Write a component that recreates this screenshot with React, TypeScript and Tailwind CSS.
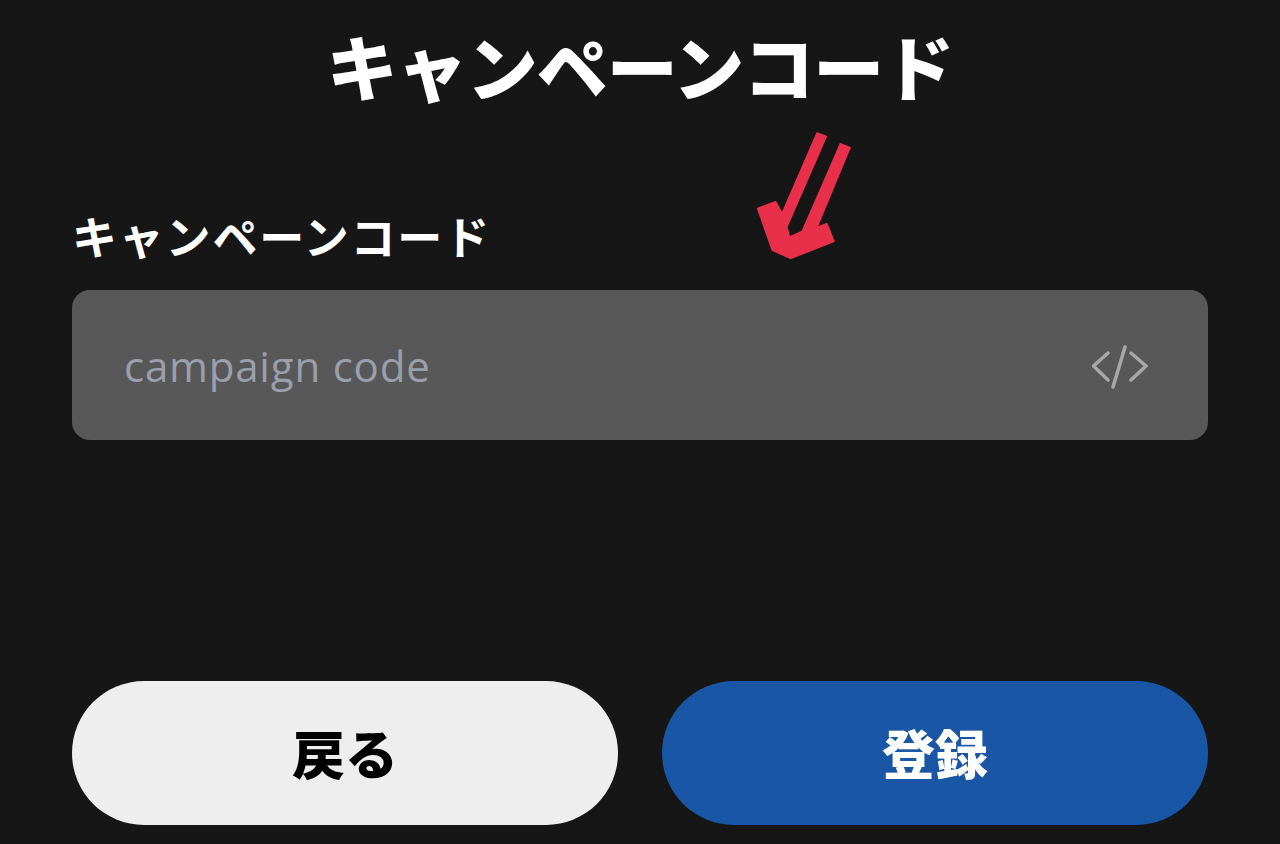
export default function App() {
  return (
    <div
      className="h-[844px] w-full overflow-hidden bg-[#161616] px-[72px] text-white"
      style={{ fontFamily: '"Noto Sans CJK JP", sans-serif' }}
    >
      <h1 className="h-[134px] pt-[20px] text-center text-[71px] leading-[88px] font-black tracking-[-1px]">キャンペーンコード</h1>

      <div className="relative h-[156px]">
        <div className="pt-[70px] text-[45px] leading-[64px] font-bold tracking-[1.8px]">キャンペーンコード</div>
        <svg className="absolute top-[-14px] left-[658px]" width="140" height="150" viewBox="0 0 420 450">
          <path
            d="M260 36 L292 48 L173 321 L180 348 L215 332 L330 68 L363 82 L265 318 L292 308 L315 365 L182 418 L125 392 L80 264 L138 242 L156 275 Z"
            fill="#e8304a"
          />
        </svg>
      </div>

      <div className="flex h-[150px] items-center justify-between rounded-[18px] bg-[#585858] pt-[4px] pr-[60px] pl-[52px]">
        <span className="mb-[4px] text-[42px] tracking-[0.8px] text-[#9a9fac]" style={{ fontFamily: '"Open Sans", sans-serif' }}>campaign code</span>
        <svg width="56" height="44" viewBox="0 0 56 44" fill="none" stroke="#a8a8a8" strokeWidth="3.5" strokeLinecap="round">
          <path d="M16 8 L1.5 21 L16 35" />
          <path d="M33 2 L21 42" />
          <path d="M39 8 L54 21 L39 35" />
        </svg>
      </div>

      <div className="mt-[241px] flex gap-[44px]">
        <button className="h-[144px] flex-1 rounded-full bg-[#eeeeee] text-[53px] font-black text-black">戻る</button>
        <button className="h-[144px] flex-1 rounded-full bg-[#1a56a6] text-[53px] font-black text-white">登録</button>
      </div>
    </div>
  );
}
